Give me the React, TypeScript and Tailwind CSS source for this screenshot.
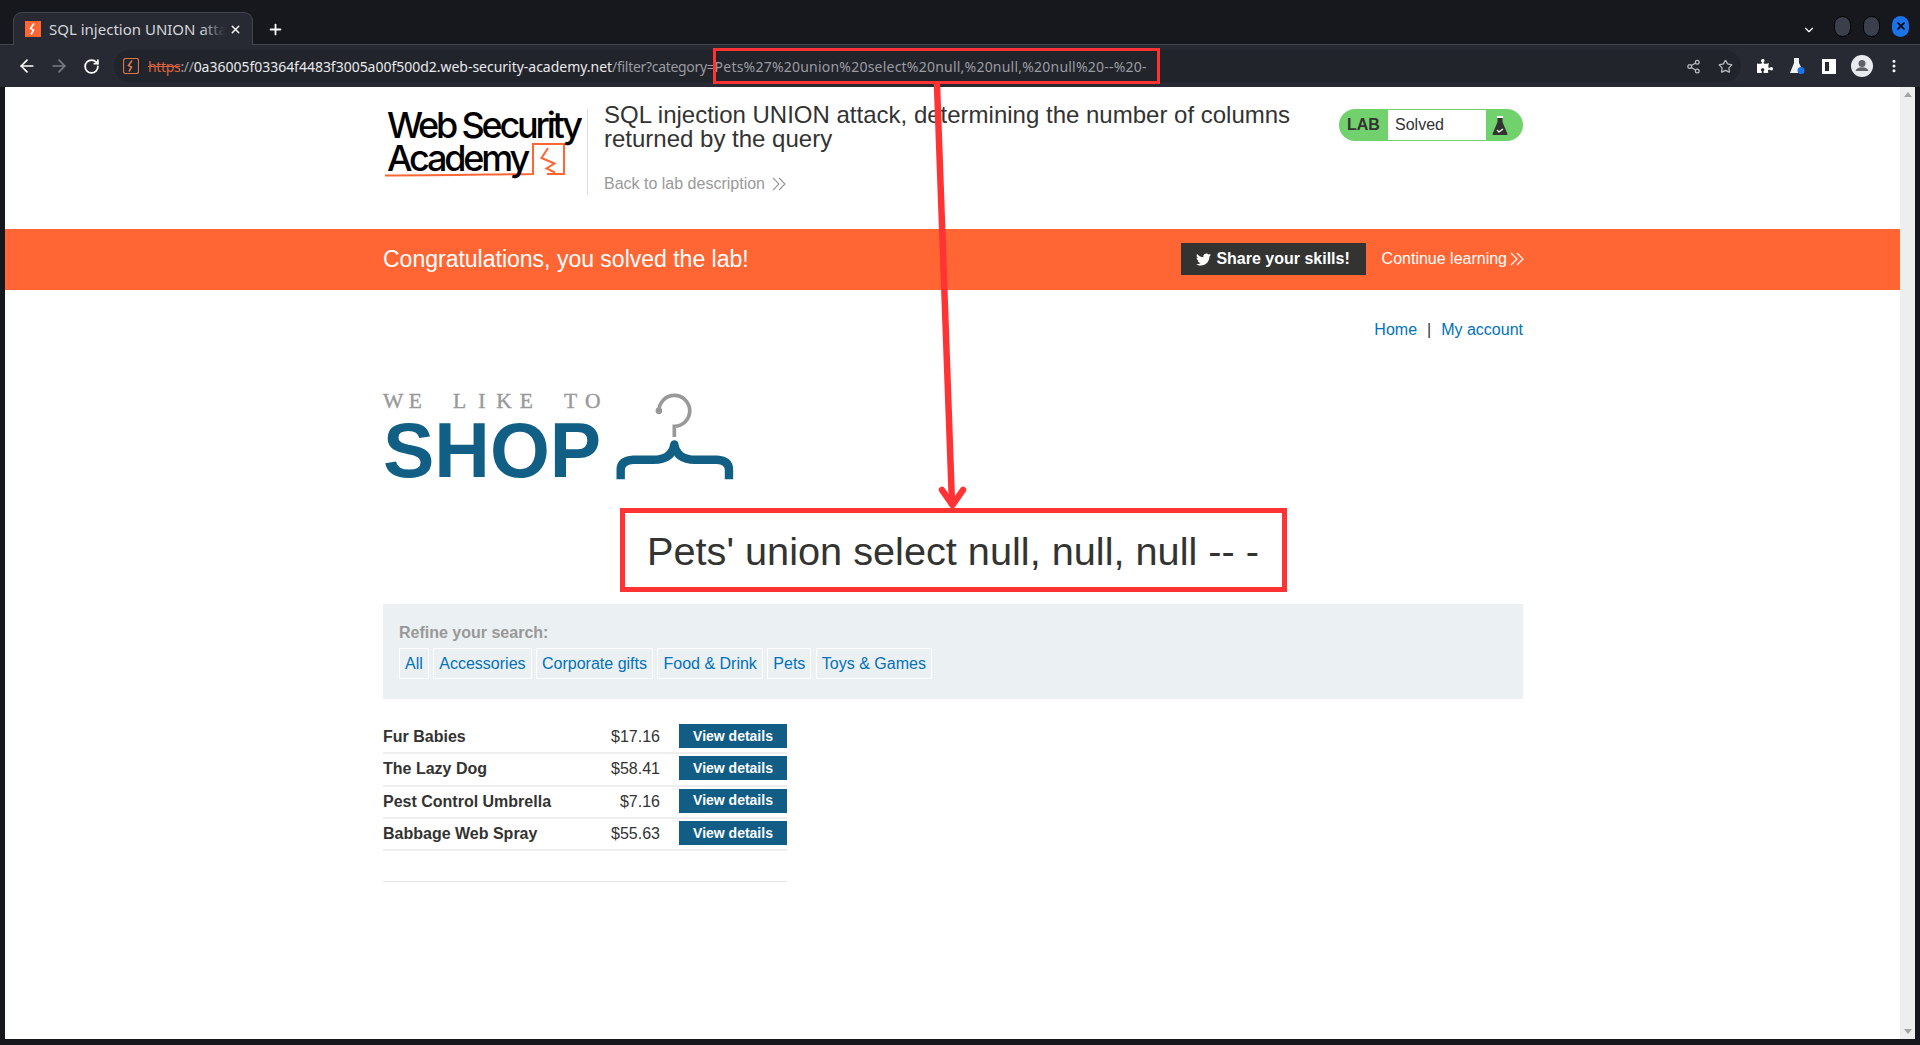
import React from 'react';
import { ArrowLeft, ArrowRight, RotateCw, Star, Share2, MoreVertical, ChevronDown, Plus, X } from 'lucide-react';
import { FaTwitter, FaPuzzlePiece } from 'react-icons/fa';

const filters = ['All', 'Accessories', 'Corporate gifts', 'Food & Drink', 'Pets', 'Toys & Games'];

const products = [
  { name: 'Fur Babies', price: '$17.16' },
  { name: 'The Lazy Dog', price: '$58.41' },
  { name: 'Pest Control Umbrella', price: '$7.16' },
  { name: 'Babbage Web Spray', price: '$55.63' },
];

const Chevrons = ({ color }: { color: string }) => (
  <svg width="16" height="14" viewBox="0 0 16 14" fill="none" stroke={color} strokeWidth="1.2">
    <path d="M2 1l6 6-6 6M8 1l6 6-6 6" />
  </svg>
);

const Favicon = ({ className, box, bolt }: { className: string; box: string; bolt: string }) => (
  <svg className={className} viewBox="0 0 16 16" fill="none">
    <rect x="0.5" y="0.5" width="15" height="15" fill={box} stroke={box === 'none' ? bolt : box} strokeWidth={box === 'none' ? 1.2 : 1} rx={box === 'none' ? 2 : 0} />
    <path d="M9 2.5L5.5 7.5l3 1.5-2.5 4.5" stroke={bolt} strokeWidth="1.6" />
  </svg>
);

const BrowserChrome = () => (
  <div className="shrink-0 font-['Noto_Sans',sans-serif]">
    <div className="h-[45px] bg-[#17181d] border-b border-[#44464b] flex items-end pl-[13px] pr-[11px] relative">
      <div className="w-[240px] h-[33px] bg-[#282a33] rounded-t-[9px] border border-b-0 border-[#44464b] flex items-center pl-[11px] -mb-px">
        <Favicon className="w-[16px] h-[16px] shrink-0" box="#ff6633" bolt="#ffffff" />
        <div className="relative ml-[8px] w-[176px] overflow-hidden">
          <span className="block text-[15px] leading-[20px] text-[#d5d7db] whitespace-nowrap">SQL injection UNION attack, determining</span>
          <span className="absolute right-0 top-0 h-full w-[24px] bg-linear-to-r from-transparent to-[#282a33]"></span>
        </div>
        <X className="w-[13px] h-[13px] ml-[4px] text-white" strokeWidth={2.5} />
      </div>
      <Plus className="w-[17px] h-[17px] text-white ml-[14px] mb-[6px]" strokeWidth={2.5} />
      <div className="ml-auto flex items-center mb-[7px] gap-[12px]">
        <ChevronDown className="w-[14px] h-[14px] text-white mt-[8px] mr-[6px]" strokeWidth={2} />
        <span className="w-[17px] h-[21px] rounded-full bg-[#3a3f4b] border border-black"></span>
        <span className="w-[17px] h-[21px] rounded-full bg-[#3a3f4b] border border-black"></span>
        <span className="w-[17px] h-[21px] rounded-full bg-[#1a73e8] flex items-center justify-center">
          <X className="w-[12px] h-[12px] text-black" strokeWidth={3.5} />
        </span>
      </div>
    </div>
    <div className="h-[42px] bg-[#282a33] flex items-center pl-[17px]">
      <ArrowLeft className="w-[20px] h-[20px] text-white" strokeWidth={2} />
      <ArrowRight className="w-[20px] h-[20px] text-[#7b7d83] ml-[12px]" strokeWidth={2} />
      <RotateCw className="w-[17px] h-[17px] text-white ml-[14px]" strokeWidth={2.5} />
      <div className="ml-[14px] h-[32px] w-[1627px] rounded-r-full rounded-l-full bg-[#22242c] flex items-center pl-[9px] pr-[8px]">
        <Favicon className="w-[16px] h-[16px] shrink-0" box="none" bolt="#d9744f" />
        <span className="ml-[9px] text-[14px] whitespace-nowrap text-[#9a9ca1]">
          <span className="tracking-[-0.33px]"><span className="text-[#d9623f] line-through">https</span>://</span>
          <span className="text-[#e8e9eb] tracking-[-0.02px]">0a36005f03364f4483f3005a00f500d2.web-security-academy.net</span>
          <span className="tracking-[-0.3px]">/filter?category=</span>
          <span className="tracking-[0.22px]">Pets%27%20union%20select%20null,%20null,%20null%20--%20-</span>
        </span>
        <Share2 className="w-[15px] h-[15px] text-[#b9bbbf] ml-auto" strokeWidth={2} />
        <Star className="w-[15px] h-[15px] text-[#b9bbbf] ml-[17px]" strokeWidth={2} />
      </div>
      <FaPuzzlePiece className="w-[16px] h-[16px] text-white ml-[16px]" />
      <svg className="w-[16px] h-[18px] ml-[16px]" viewBox="0 0 16 18">
        <path d="M5 1h5v5l5 10H1L5 6z" fill="#f2f2f2" />
        <circle cx="12" cy="13.5" r="3.5" fill="#1a73e8" />
      </svg>
      <span className="w-[14px] h-[15px] ml-[17px] border-[3px] border-r-[7px] border-white"></span>
      <svg className="w-[22px] h-[22px] ml-[15px]" viewBox="0 0 22 22">
        <circle cx="11" cy="11" r="11" fill="#e8eaed" />
        <circle cx="11" cy="8.5" r="3.5" fill="#5f6368" />
        <path d="M4.500 16c1-3 3.500-3.800 6.500-3.800s5.500.8 6.500 3.800z" fill="#5f6368" />
      </svg>
      <MoreVertical className="w-[16px] h-[16px] text-white ml-[13px]" strokeWidth={2.5} />
    </div>
  </div>
);

const LabHeader = () => (
  <div className="h-[142px] w-[1141px] mx-auto flex items-start">
    <div className="w-[206px] h-[86px] mt-[22px] border-r border-[#dddddd] shrink-0 relative font-['Inter',sans-serif] font-medium text-black tracking-[-3.2px] text-[36px] leading-[32.5px] pl-[5px] whitespace-nowrap">
      <svg className="absolute left-0 top-0" width="206" height="82" viewBox="0 0 206 82" fill="none" stroke="#ff6633" strokeWidth="2">
        <path d="M3 66.500c50 0 100-1 148-1.500V35h31v30h-17" />
        <path d="M166 39l-6.500 10 13 5.500-8 5 8.500 4" />
      </svg>
      <div className="relative">Web Security</div>
      <div className="relative">Academy</div>
    </div>
    <div className="ml-[16px] w-[720px] pt-[16px] font-['Liberation_Sans',sans-serif]">
      <h2 className="text-[24px] leading-[24px] text-[#333332]">SQL injection UNION attack, determining the number of columns returned by the query</h2>
      <a className="mt-[21px] flex items-center gap-[6px] text-[16px] text-[#999999]">Back to lab description <Chevrons color="#999999" /></a>
    </div>
    <div className="ml-auto mt-[22px] h-[32px] w-[184px] rounded-full bg-[#70d16d] flex items-center overflow-hidden p-px font-['Liberation_Sans',sans-serif]">
      <span className="w-[48px] pl-[7px] text-[16px] font-bold text-[#333332]">LAB</span>
      <span className="w-[98px] h-full bg-white pl-[7px] text-[16px] leading-[29px] text-[#333332]">Solved</span>
      <svg className="ml-[6px]" width="16" height="21" viewBox="0 0 16 21">
        <path d="M5.500 3h5v4l5 12q.3 1-1 1H1.500q-1.300 0-1-1l5-12z" fill="#333332" />
        <path d="M5 1h6v2H5z" fill="#f5f5f5" />
        <path d="M5 15l2 2 4-3" stroke="#ffffff" strokeWidth="1.200" fill="none" />
      </svg>
    </div>
  </div>
);

const SolvedBanner = () => (
  <div className="h-[61px] bg-[#ff6633] font-['Liberation_Sans',sans-serif]">
    <div className="w-[1141px] h-full mx-auto flex items-center text-white pb-[1px] pl-[1px]">
      <span className="text-[23px]">Congratulations, you solved the lab!</span>
      <button className="ml-auto w-[185px] h-[32px] bg-[#333332] flex items-center justify-center gap-[5px] text-[16px] font-bold">
        <FaTwitter className="w-[15px] h-[15px]" /> Share your skills!
      </button>
      <a className="ml-[16px] -mr-[2px] flex items-center text-[16px] gap-[2px]">Continue learning <Chevrons color="#ffffff" /></a>
    </div>
  </div>
);

const ShopLogo = () => (
  <div className="flex items-start mt-[54px] h-[90px]">
    <div className="w-[224px]">
      <div className="flex -ml-[1px] -mt-[2px] font-['Liberation_Serif',serif] text-[21.500px] leading-[22px] text-[#999999] [-webkit-text-stroke:0.4px_#999999]">
        {'WE LIKE TO'.split('').map((c, i) => (
          <span key={i} className="w-[22.200px] shrink-0 text-center whitespace-pre">{c}</span>
        ))}
      </div>
      <div className="mt-[5px] font-['Liberation_Sans',sans-serif] font-bold text-[#125f85] text-[77px] leading-[66px] whitespace-nowrap">SHOP</div>
    </div>
    <svg className="ml-[9px]" width="118" height="88" viewBox="738 68 352 262" fill="none">
      <path d="M866 124a46 46 0 1 1 46 46v32" stroke="#999999" strokeWidth="11" />
      <circle cx="866" cy="124" r="10" fill="#999999" />
      <path d="M752 328v-28q0-28 38-30h60q55 0 62-46 7 46 62 46h65q36 2 36 30v28" stroke="#125f85" strokeWidth="25" strokeLinejoin="round" />
    </svg>
  </div>
);

const App = () => (
  <div className="w-[1920px] h-[1045px] bg-[#16171c] relative overflow-hidden flex flex-col">
    <BrowserChrome />
    <div className="flex-1 ml-[5px] mb-[6px] mr-[5px] flex min-h-0">
      <main className="flex-1 bg-white font-['Liberation_Sans',sans-serif] text-[#333332] text-[16px]">
        <LabHeader />
        <SolvedBanner />
        <div className="w-[1141px] mx-auto pl-[1px]">
          <div className="flex justify-end items-center gap-[10px] pt-[32px] h-[48px] leading-[20px]">
            <a className="text-[#0071bc]">Home</a>
            <span>|</span>
            <a className="text-[#0071bc]">My account</a>
          </div>
          <ShopLogo />
          <h1 className="text-center text-[39.700px] leading-[46px] mt-[46px] text-[#333332]">Pets' union select null, null, null -- -</h1>
          <section className="mt-[30px] h-[95px] bg-[#ebf0f2] pt-[20px] px-[16px]">
            <div className="font-bold text-[#999999] leading-[18px]">Refine your search:</div>
            <div className="flex gap-[4.500px] mt-[6px]">
              {filters.map(f => (
                <a key={f} className="h-[31px] border border-white px-[5px] text-[#0071bc] leading-[29px]">{f}</a>
              ))}
            </div>
          </section>
          <div className="w-[404px] mt-[23px] border-b border-[#e6e6e6] pb-[30px]">
            {products.map(p => (
              <div key={p.name} className="h-[32.300px] border-b-2 border-[#eeeeee] flex items-center">
                <span className="font-bold flex-1">{p.name}</span>
                <span>{p.price}</span>
                <button className="ml-[19px] w-[108px] h-[24px] bg-[#125d85] text-white font-bold text-[14px] mb-[2px]">View details</button>
              </div>
            ))}
          </div>
        </div>
      </main>
      <div className="w-[15px] bg-[#eeeeee] flex flex-col items-center justify-between py-[5px]">
        <span className="w-0 h-0 border-x-[4px] border-x-transparent border-b-[5px] border-b-[#a3a3a3]"></span>
        <span className="w-0 h-0 border-x-[4px] border-x-transparent border-t-[5px] border-t-[#a3a3a3]"></span>
      </div>
    </div>

    {/* red annotations drawn over the screenshot */}
    <div className="absolute left-[713px] top-[48px] w-[447px] h-[36px] border-[3px] border-[#ff3333]"></div>
    <div className="absolute left-[620px] top-[508px] w-[667px] h-[84px] border-[5px] border-[#ff3333]"></div>
    <svg className="absolute left-0 top-0" width="1920" height="1045" fill="none" stroke="#ff3333" strokeWidth="6.500" strokeLinecap="round" strokeLinejoin="round">
      <path d="M937 85L952 504" />
      <path d="M942 490l10.500 15 10.500-15" />
    </svg>
  </div>
);

export default App;
